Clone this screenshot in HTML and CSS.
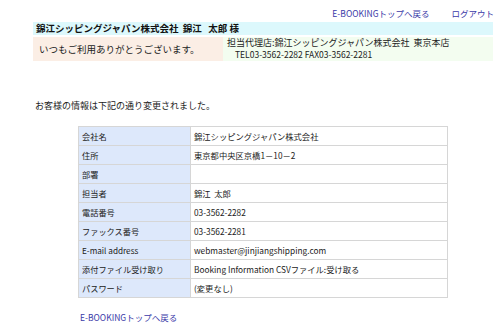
FILE: index.html
```html
<!DOCTYPE html>
<html lang="ja">
<head>
    <meta charset="UTF-8">
    <title>お客様情報変更完了</title>
    <link rel="stylesheet" href="styles.css">
</head>
<body>

    <div class="top-links">
        <a href="#">E-BOOKINGトップへ戻る</a>
        <a href="#">ログアウト</a>
    </div>

    <!-- ヘッダー -->
    <div class="header">
        <div class="header-title">錦江シッピングジャパン株式会社&nbsp; 錦江&nbsp;&nbsp; 太郎 様</div>
        <div class="header-row">
            <div class="greeting">いつもご利用ありがとうございます。</div>
            <div class="agent">
                <div>担当代理店:錦江シッピングジャパン株式会社&nbsp; 東京本店</div>
                <div class="agent-tel">TEL03-3562-2282 FAX03-3562-2281</div>
            </div>
        </div>
    </div>

    <p class="message">お客様の情報は下記の通り変更されました。</p>

    <table class="info">
        <tr><th>会社名</th><td>錦江シッピングジャパン株式会社</td></tr>
        <tr><th>住所</th><td>東京都中央区京橋1－10－2</td></tr>
        <tr><th>部署</th><td></td></tr>
        <tr><th>担当者</th><td>錦江&nbsp; 太郎</td></tr>
        <tr><th>電話番号</th><td>03-3562-2282</td></tr>
        <tr><th>ファックス番号</th><td>03-3562-2281</td></tr>
        <tr><th>E-mail address</th><td>webmaster@jinjiangshipping.com</td></tr>
        <tr><th>添付ファイル受け取り</th><td>Booking Information CSVファイル:受け取る</td></tr>
        <tr><th>パスワード</th><td>(変更なし)</td></tr>
    </table>

    <div class="bottom-link">
        <a href="#">E-BOOKINGトップへ戻る</a>
    </div>

</body>
</html>
```

FILE: styles.css
```css
* {
    margin: 0;
    padding: 0;
    box-sizing: border-box;
}

body {
    width: 500px;
    height: 328px;
    background: #fff;
    color: #222;
    font-family: "Noto Sans CJK JP", "Noto Sans", sans-serif;
    font-size: 9px;
    overflow: hidden;
}

a {
    color: #3a3aa8;
    text-decoration: none;
}

.top-links {
    display: flex;
    justify-content: flex-end;
    gap: 22px;
    padding: 6px 6px 0 0;
    height: 22px;
    line-height: 14px;
    font-size: 8.5px;
}

.header {
    margin-left: 33px;
    width: 460px;
}

.header-title {
    background: #dcf8fc;
    font-weight: bold;
    font-size: 9.5px;
    height: 13px;
    line-height: 13px;
    padding-left: 3px;
    color: #111;
}

.header-row {
    display: flex;
    margin-top: 2px;
    height: 24px;
}

.greeting {
    width: 190px;
    background: #fbeee5;
    padding-left: 6px;
    line-height: 24px;
    font-size: 9.5px;
}

.agent {
    flex: 1;
    background: #f3fdf0;
    padding-left: 4px;
    line-height: 12px;
}

.agent-tel {
    padding-left: 8px;
    font-size: 8.5px;
    line-height: 11px;
}

.message {
    margin: 38px 0 0 35px;
    line-height: 14px;
}

.info {
    margin: 13px 0 0 78px;
    width: 370px;
    border-collapse: collapse;
    border: 1px solid #d6d6d6;
}

.info th,
.info td {
    height: 19px;
    border: 1px solid #d6d6d6;
    padding: 0 3px;
    text-align: left;
    font-weight: normal;
    vertical-align: middle;
}

.info th {
    width: 112px;
    background: #dde8fb;
    font-size: 8.2px;
}

.info td {
    font-size: 8.3px;
}

.bottom-link {
    margin: 13px 0 0 80px;
    font-size: 8.5px;
}
```
